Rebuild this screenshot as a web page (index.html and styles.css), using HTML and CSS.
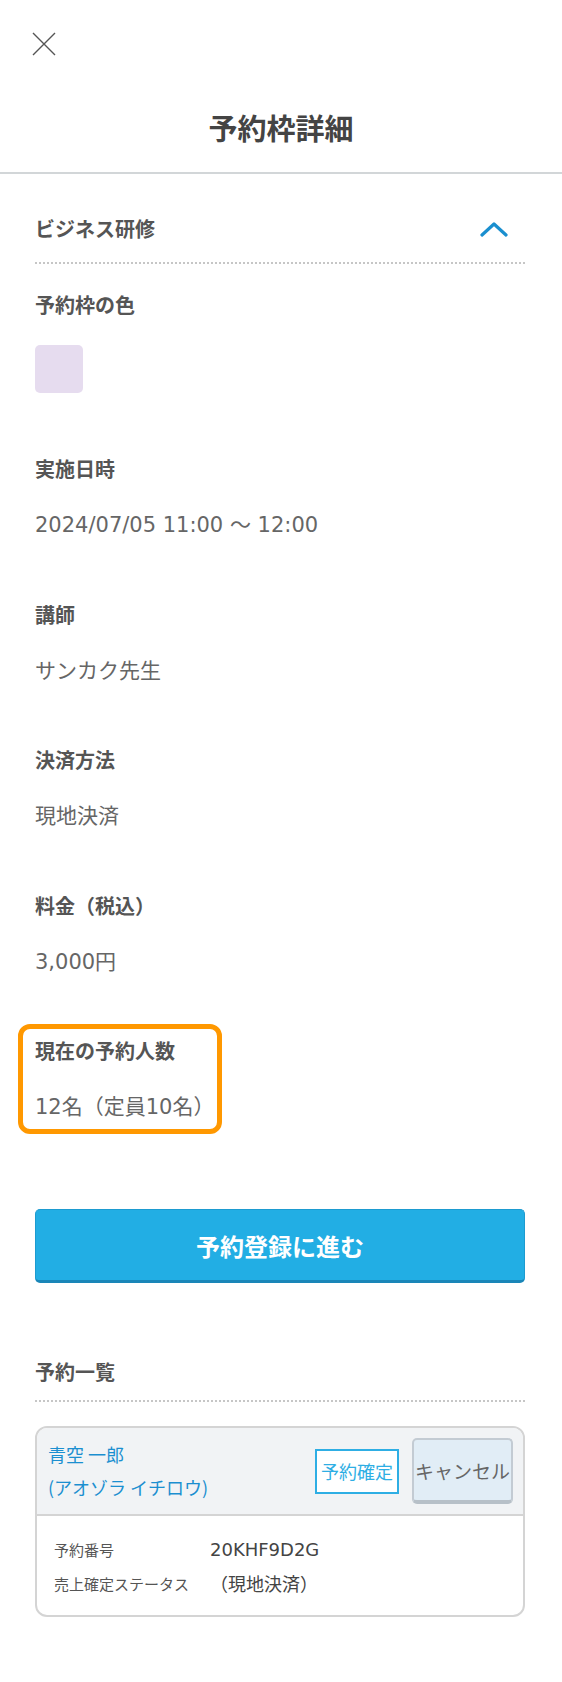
FILE: index.html
```html
<!DOCTYPE html>
<html lang="ja">
<head>
<meta charset="utf-8">
<title>予約枠詳細</title>
<link rel="stylesheet" href="styles.css">
</head>
<body>
<header class="top">
  <button class="close" aria-label="閉じる">
    <svg width="24" height="24" viewBox="0 0 24 24"><path d="M1 1 L23 23 M23 1 L1 23" stroke="#555" stroke-width="1.4" fill="none"/></svg>
  </button>
  <h1 class="title">予約枠詳細</h1>
</header>
<main class="content">
  <div class="sec-head">
    <span class="sec-name">ビジネス研修</span>
    <svg class="chev" width="28" height="16" viewBox="0 0 28 16"><polyline points="2,14 14,3 26,14" stroke="#1a8fcf" stroke-width="3.2" fill="none" stroke-linecap="round" stroke-linejoin="round"/></svg>
  </div>
  <div class="dots"></div>

  <div class="item item-color">
    <div class="label">予約枠の色</div>
    <div class="swatch"></div>
  </div>
  <div class="item">
    <div class="label">実施日時</div>
    <div class="value">2024/07/05 11:00 〜 12:00</div>
  </div>
  <div class="item">
    <div class="label">講師</div>
    <div class="value">サンカク先生</div>
  </div>
  <div class="item">
    <div class="label">決済方法</div>
    <div class="value">現地決済</div>
  </div>
  <div class="item">
    <div class="label">料金（税込）</div>
    <div class="value">3,000円</div>
  </div>
  <div class="item item-highlight">
    <div class="label">現在の予約人数</div>
    <div class="value">12名（定員10名）</div>
  </div>

  <button class="primary">予約登録に進む</button>

  <div class="list-head">予約一覧</div>
  <div class="dots"></div>

  <div class="card">
    <div class="card-head">
      <div class="names">
        <div>青空 一郎</div>
        <div>(アオゾラ イチロウ)</div>
      </div>
      <span class="tag-confirm">予約確定</span>
      <button class="cancel">キャンセル</button>
    </div>
    <div class="card-body">
      <div class="row"><span class="k">予約番号</span><span class="v">20KHF9D2G</span></div>
      <div class="row"><span class="k">売上確定ステータス</span><span class="v">（現地決済）</span></div>
    </div>
  </div>
</main>
</body>
</html>
```
FILE: styles.css
```css
* { box-sizing: border-box; }
html, body { margin: 0; padding: 0; background: #fff; }
body {
  font-family: "Noto Sans CJK JP", "Noto Sans", sans-serif;
  color: #555;
  width: 562px;
}
.top {
  padding: 32px 0 25px;
  border-bottom: 2px solid #d2d6d8;
}
.close {
  display: block;
  margin-left: 32px;
  padding: 0;
  border: 0;
  background: none;
  width: 24px;
  height: 24px;
}
.close svg { display: block; }
.title {
  margin: 51px 0 0;
  text-align: center;
  font-size: 29px;
  line-height: 40px;
  font-weight: 700;
  color: #444;
}
.content {
  padding: 40px 37px 0 35px;
}
.sec-head {
  display: flex;
  justify-content: space-between;
  align-items: center;
  height: 30px;
}
.sec-name {
  font-size: 20px;
  font-weight: 700;
  line-height: 30px;
  color: #555;
}
.chev { margin-right: 17px; display: block; }
.dots {
  height: 2px;
  margin-top: 18px;
  background: repeating-linear-gradient(90deg, #c6c6c6 0 2px, transparent 2px 4px);
}
.item { margin-top: 59.5px; }
.item-color { margin-top: 26px; }
.label {
  font-size: 20px;
  font-weight: 700;
  line-height: 30px;
  color: #555;
}
.value {
  margin-top: 26px;
  font-family: "DejaVu Sans", "Noto Sans CJK JP", sans-serif;
  font-size: 21px;
  line-height: 30px;
  color: #666;
}
.swatch {
  margin-top: 25px;
  width: 48px;
  height: 48px;
  border-radius: 5px;
  background: #e6dcef;
}
.item-color + .item { margin-top: 61px; }
.item-highlight {
  position: relative;
  width: fit-content;
}
.item-highlight::after {
  content: "";
  position: absolute;
  top: -12px;
  bottom: -12px;
  left: -17px;
  right: -8px;
  border: 5px solid #ff9800;
  border-radius: 12px;
  pointer-events: none;
}
.primary {
  display: block;
  width: 100%;
  height: 74px;
  margin-top: 87px;
  border: 1px solid #1d9bd0;
  border-bottom: 3px solid #1a86b8;
  border-radius: 5px;
  background: #22aee4;
  color: #fff;
  font-family: inherit;
  font-size: 24px;
  font-weight: 700;
}
.list-head {
  margin-top: 74px;
  font-size: 20px;
  font-weight: 700;
  line-height: 30px;
  color: #555;
}
.list-head + .dots { margin-top: 13px; }
.card {
  margin-top: 24px;
  border: 2px solid #d4d4d4;
  border-radius: 12px;
  overflow: hidden;
}
.card-head {
  display: flex;
  align-items: center;
  background: #f1f3f5;
  border-bottom: 2px solid #d4d4d4;
  padding: 10px 10px 10px 11px;
  min-height: 88px;
}
.names {
  flex: 1;
  color: #1b8fd0;
  font-size: 18px;
  line-height: 33px;
}
.tag-confirm {
  display: flex;
  align-items: center;
  justify-content: center;
  width: 84px;
  height: 45px;
  border: 2px solid #2eaee4;
  background: #fff;
  color: #2eaee4;
  font-size: 18px;
}
.cancel {
  margin-left: 13px;
  width: 101px;
  height: 66px;
  border: 2px solid #c3cbd3;
  border-bottom: 4px solid #b7c0c8;
  border-radius: 5px;
  background: #e1edf6;
  color: #666;
  font-family: inherit;
  font-size: 19px;
  padding: 0;
}
.card-body {
  padding: 16px 10px 15px 17px;
}
.row {
  display: flex;
  align-items: center;
  height: 34px;
}
.k {
  width: 156px;
  font-size: 15px;
  color: #555;
}
.v {
  font-family: "DejaVu Sans", "Noto Sans CJK JP", sans-serif;
  font-size: 18px;
  color: #444;
}
```
